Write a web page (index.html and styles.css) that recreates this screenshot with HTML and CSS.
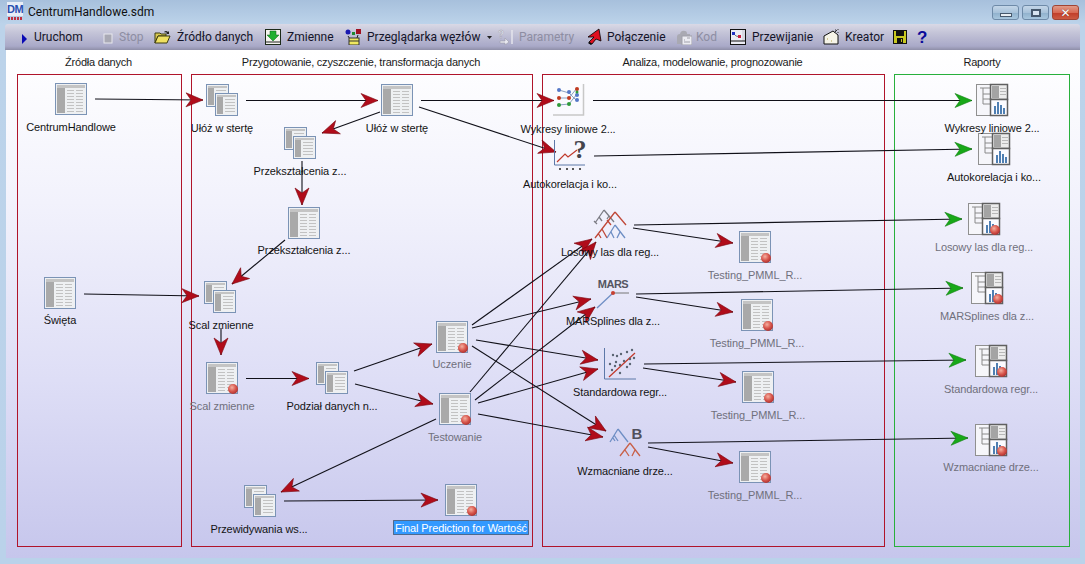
FILE: index.html
```html
<!DOCTYPE html>
<html lang="pl">
<head>
<meta charset="utf-8">
<title>CentrumHandlowe.sdm</title>
<link rel="stylesheet" href="styles.css">
</head>
<body>
<div class="window">
  <header class="titlebar">
    <div class="appicon"><span class="appicon-dm">DM</span><span class="appicon-dots"></span></div>
    <div class="title">CentrumHandlowe.sdm</div>
    <div class="controls">
      <button class="ctl"><span class="glyph-min"></span></button>
      <button class="ctl ctl-max"><span class="glyph-max"></span></button>
      <button class="ctl ctl-close"><span class="glyph-close">✕</span></button>
    </div>
  </header>

  <nav class="toolbar">
    <div class="tb"><svg class="ic run" width="7" height="16" viewBox="0 0 7 16"><path d="M1 5v10l5-5z" fill="#0a0ab4"/></svg><span>Uruchom</span></div>
    <div class="tb off"><svg class="ic stop" width="10" height="16" viewBox="0 0 10 16"><rect x="1" y="5" width="8" height="9" fill="#a9a9b4" stroke="#e8e8ee"/></svg><span>Stop</span></div>
    <div class="tb"><svg class="ic" width="17" height="16" viewBox="0 0 17 16"><path d="M1 4h5l1 1h5v2H4L1 14z" fill="#d8c850" stroke="#3c3c10"/><path d="M4 7h12l-3 7H1z" fill="#efe060" stroke="#3c3c10"/><path d="M10 3q2-2 4 0l1-1v3h-3l1-1q-1-1-2-.5" fill="#222"/></svg><span>Źródło danych</span></div>
    <div class="tb"><svg class="ic" width="16" height="16" viewBox="0 0 16 16"><rect x=".5" y=".5" width="15" height="15" fill="#f4f4ee" stroke="#1c2a18"/><path d="M5 2h6v4h3l-6 6-6-6h3z" fill="#20b030" stroke="#106018" stroke-width=".5"/><path d="M1 13h14" stroke="#222"/></svg><span>Zmienne</span></div>
    <div class="tb"><svg class="ic" width="16" height="16" viewBox="0 0 16 16"><circle cx="3" cy="3" r="2.500" fill="#1a1ab0"/><rect x="11" y="0" width="5" height="5" fill="#a01020"/><rect x="7" y="3" width="3" height="3" fill="#208830"/><path d="M3 7l2 3M13 6l-1 3" stroke="#222"/><rect x="4" y="9" width="10" height="7" fill="#f0e860" stroke="#333"/><path d="M4 12h10" stroke="#333"/></svg><span>Przeglądarka węzłów</span><svg class="caret" width="5" height="3" viewBox="0 0 5 3"><path d="M0 0h5L2.500 3z" fill="#222"/></svg></div>
    <div class="tb off"><svg class="ic" width="16" height="16" viewBox="0 0 16 16"><text x="1" y="9" class="ic-q">?</text><path d="M3 12h5v-3l4 4-4 3v-2H3z" fill="#e8e8f0" stroke="#9a9aa8" stroke-width=".6"/><path d="M15 1v14" stroke="#e4e4ec" stroke-width="1.500"/></svg><span>Parametry</span></div>
    <div class="tb"><svg class="ic" width="16" height="18" viewBox="0 0 16 18"><path d="M12 1L14 13 9 11 5 16 2 14 7 9 1 9z" fill="#e01020" stroke="#000" stroke-width=".8"/><path d="M2 14l3 2-1 1-3-2z" fill="#000"/></svg><span class="tight">Połączenie</span></div>
    <div class="tb off"><svg class="ic" width="16" height="16" viewBox="0 0 16 16"><path d="M1 8q0-3 3-3 1-4 5-3 2 0 2 3h3v2H7v8H1z" fill="#a9a9b2"/><rect x="6" y="7" width="10" height="9" fill="#ececf2" stroke="#a0a0aa"/><path d="M8 13h6M8 11h1M11 9h3" stroke="#a0a0aa"/></svg><span class="tight">Kod</span></div>
    <div class="tb"><svg class="ic" width="16" height="16" viewBox="0 0 16 16"><rect x=".5" y=".5" width="15" height="15" fill="#ececf4" stroke="#111"/><rect x="12" y="1" width="3" height="11" fill="#d8d8e2"/><path d="M1 12h14" stroke="#111"/><path d="M3 4l3 3 4 1" fill="none" stroke="#777"/><rect x="2" y="3" width="3" height="3" fill="#2030c0"/><rect x="8" y="6" width="3" height="3" fill="#c82040"/></svg><span>Przewijanie</span></div>
    <div class="tb"><svg class="ic" width="16" height="16" viewBox="0 0 16 16"><path d="M1 7L10 2l5 4v9H1z" fill="#f6f4e8" stroke="#111"/><path d="M11 4l3-3M12 1h1M15 3v1M15 0v1" stroke="#333"/><path d="M4 10h1M8 12h1" stroke="#b0a050"/></svg><span>Kreator</span></div>
    <div class="tb"><svg width="14" height="14" viewBox="0 0 14 14"><rect x=".5" y=".5" width="13" height="13" fill="#c8c820" stroke="#111"/><rect x="3" y="1" width="8" height="5" fill="#111"/><rect x="4" y="8" width="6" height="5" fill="#111"/><rect x="8" y="9" width="1" height="3" fill="#c8c820"/></svg></div>
    <div class="tb help">?</div>
  </nav>

  <main class="canvas">
    <svg class="diagram" width="1074" height="508" viewBox="6 50 1074 508">
      <defs>
        <marker id="hr" markerUnits="userSpaceOnUse" markerWidth="20" markerHeight="18" refX="18" refY="9" orient="auto"><path d="M18 9L1 2 6 9 1 16z" fill="#b00c1a" stroke="#7c0810" stroke-width=".6"/></marker>
        <marker id="hg" markerUnits="userSpaceOnUse" markerWidth="20" markerHeight="18" refX="18" refY="9" orient="auto"><path d="M18 9L1 2 6 9 1 16z" fill="#18a818" stroke="#108010" stroke-width=".6"/></marker>
        <radialGradient id="redball" cx=".4" cy=".35" r=".7"><stop offset="0" stop-color="#f4b0a0"/><stop offset=".55" stop-color="#d8564c"/><stop offset="1" stop-color="#a82c2c"/></radialGradient>

        <symbol id="rows" viewBox="0 0 32 32" overflow="visible">
          <rect x=".5" y=".5" width="31" height="31" fill="#eef0f2" stroke="#7b93b5"/>
          <rect x="2" y="2" width="28" height="3" fill="#c4c4c4"/>
          <rect x="2" y="5" width="8" height="25" fill="#a9a9a9"/>
          <path d="M12 7.500h7M21 7.500h7M12 10.500h7M21 10.500h7M12 13.500h7M21 13.500h7M12 16.500h7M21 16.500h7M12 19.500h7M21 19.500h7M12 22.500h7M21 22.500h7M12 25.500h7M21 25.500h7M12 28.500h7M21 28.500h7" stroke="#c2c2c2"/>
        </symbol>
        <symbol id="tb" viewBox="0 0 32 32" overflow="visible">
          <use href="#rows" width="32" height="32"/>
          <circle cx="27" cy="27" r="5" fill="url(#redball)"/>
        </symbol>
        <symbol id="small" viewBox="0 0 23 23">
          <rect x=".5" y=".5" width="22" height="22" fill="#eef0f2" stroke="#7b93b5"/>
          <rect x="2" y="2" width="19" height="2" fill="#c4c4c4"/>
          <rect x="2" y="4" width="6" height="17" fill="#a9a9a9"/>
          <path d="M10 6.500h10M10 9.500h10M10 12.500h10M10 15.500h10M10 18.500h10" stroke="#c2c2c2"/>
        </symbol>
        <symbol id="stack" viewBox="0 0 32 32">
          <use href="#small" x="0" y="0" width="23" height="23"/>
          <use href="#small" x="9" y="9" width="23" height="23"/>
        </symbol>
        <symbol id="rep" viewBox="0 0 32 32" overflow="visible">
          <rect x=".5" y=".5" width="14" height="31" fill="#f6f6fa" stroke="#909090"/>
          <path d="M4 4h10M7 4v16M7 10h7M7 15h7M7 20h7" fill="none" stroke="#8a8a8a"/>
          <rect x="14.500" y=".5" width="17" height="15" fill="#ececec" stroke="#606060" stroke-width="1.500"/>
          <rect x="16" y="2" width="7" height="12" fill="#a4a4a4"/>
          <path d="M24 4.500h6M24 7.500h6M24 10.500h6" stroke="#b8b8b8"/>
          <rect x="14.500" y="15.500" width="17" height="16" fill="#fbfbff" stroke="#606060" stroke-width="1.500"/>
          <path d="M18 22h2v8h-2zM21 18h2v12h-2zM24 21h2v9h-2zM27 24h2v6h-2z" fill="#4f7fb2"/>
        </symbol>
        <symbol id="repb" viewBox="0 0 32 32" overflow="visible">
          <use href="#rep" width="32" height="32"/>
          <circle cx="27" cy="27" r="5" fill="url(#redball)"/>
        </symbol>
      </defs>

      <rect class="zone red" x="17.500" y="74.500" width="164" height="472"/>
      <rect class="zone red" x="191.500" y="74.500" width="341" height="472"/>
      <rect class="zone red" x="542.500" y="74.500" width="342" height="472"/>
      <rect class="zone green" x="894.500" y="74.500" width="175" height="472"/>

      <g class="cap">
        <text x="98.500" y="66">Źródła danych</text>
        <text x="361" y="66">Przygotowanie, czyszczenie, transformacja danych</text>
        <text x="712.500" y="66">Analiza, modelowanie, prognozowanie</text>
        <text x="982" y="66">Raporty</text>
      </g>

      <g class="links-r">
        <path d="M95 99L203 100"/><path d="M246 100.500H378"/><path d="M421 100.500H554"/>
        <path d="M419 107L556 152"/><path d="M380 112L322 133"/><path d="M302 161V205"/>
        <path d="M285 240L232 284"/><path d="M84 294L199 296"/><path d="M221 328V355"/>
        <path d="M246 378.500H309"/><path d="M354 371L432 344"/><path d="M355 384L433 404"/>
        <path d="M472 325L592 239"/><path d="M470 392L596 242"/>
        <path d="M472 328L591 299"/><path d="M475 400L595 307"/>
        <path d="M476 340L598 360"/><path d="M478 403L598 369"/>
        <path d="M472 346L606 431"/><path d="M478 414L603 437"/>
        <path d="M436 419L281 492"/><path d="M284 501L438 500"/>
        <path d="M633 228L733 243"/><path d="M636 297L733 312"/>
        <path d="M643 368L736 382"/><path d="M648 447L733 463"/>
      </g>
      <g class="links-g">
        <path d="M593 100.500H972"/><path d="M594 156L972 149"/>
        <path d="M634 225L962 219"/><path d="M636 294L963 288"/>
        <path d="M644 364L966 360"/><path d="M648 443L968 438"/>
      </g>

      <use href="#rows" x="55" y="83" width="32" height="32"/>
      <use href="#rows" x="44" y="277" width="32" height="32"/>
      <use href="#stack" x="206" y="84" width="32" height="32"/>
      <use href="#rows" x="381" y="84" width="32" height="32"/>
      <use href="#stack" x="284" y="127" width="32" height="32"/>
      <use href="#rows" x="288" y="207" width="32" height="32"/>
      <use href="#stack" x="204" y="281" width="32" height="32"/>
      <use href="#tb" x="206" y="362" width="32" height="32"/>
      <use href="#stack" x="316" y="362" width="32" height="32"/>
      <use href="#tb" x="436" y="321" width="32" height="32"/>
      <use href="#tb" x="439" y="393" width="32" height="32"/>
      <use href="#stack" x="244" y="485" width="32" height="32"/>
      <use href="#tb" x="445" y="484" width="32" height="32"/>
      <use href="#tb" x="739" y="231" width="32" height="32"/>
      <use href="#tb" x="741" y="299" width="32" height="32"/>
      <use href="#tb" x="742" y="371" width="32" height="32"/>
      <use href="#tb" x="739" y="451" width="32" height="32"/>
      <use href="#rep" x="976" y="84" width="32" height="32"/>
      <use href="#rep" x="978" y="133" width="32" height="32"/>
      <use href="#repb" x="968" y="203" width="32" height="32"/>
      <use href="#repb" x="971" y="272" width="32" height="32"/>
      <use href="#repb" x="975" y="345" width="32" height="32"/>
      <use href="#repb" x="975" y="424" width="32" height="32"/>

      <g class="node-line">
        <path d="M583.500 84v31H553" stroke="#c8c8c8" fill="none" stroke-width="1.500"/>
        <path d="M559 90l10 3 8 8M559 98h10l8-10M559 105l10-1 8-10" fill="none" stroke="#8aa0c0"/>
        <g fill="#5578c8"><circle cx="559" cy="90" r="2"/><circle cx="569" cy="92" r="2"/><circle cx="577" cy="95" r="2"/><circle cx="577" cy="100" r="2"/></g>
        <g fill="#c03a20"><circle cx="559" cy="98" r="2"/><circle cx="569" cy="98" r="2"/><circle cx="577" cy="89" r="2"/></g>
        <g fill="#2e9a3a"><circle cx="559" cy="105" r="2"/><circle cx="569" cy="104" r="2"/><circle cx="577" cy="92" r="1.500"/></g>
      </g>

      <g class="node-auto">
        <path d="M554.500 140v25H585" fill="none" stroke="#5d78a8"/>
        <path d="M557 162l8-8 3 3 9-7" fill="none" stroke="#c0392b" stroke-width="1.200"/>
        <text class="autoq" x="580" y="158">?</text>
        <g fill="#555"><rect x="559" y="168" width="2" height="2"/><rect x="566" y="168" width="2" height="2"/><rect x="572" y="168" width="2" height="2"/><rect x="579" y="168" width="2" height="2"/></g>
      </g>

      <g class="node-forest" fill="none" stroke-width="1.300">
        <path d="M604 210l-9 13M604 210l10 12M599 217l3 4M609 216l-2 3M594 221l3 3" stroke="#7c7c84"/>
        <path d="M615 212l11 13M615 212l-20 26M602 229l5 9M607 220l4 5M598 233l3 5" stroke="#c04838"/>
        <path d="M615 225l-8 13M615 225l10 13M611 232l3 6M620 232l-3 6" stroke="#6e8ec4"/>
      </g>

      <g class="node-mars">
        <text class="mars" x="613" y="288">MARS</text>
        <path d="M597 308l16-15" stroke="#6e8ec4" fill="none" stroke-width="1.300"/>
        <path d="M613 293h16" stroke="#777" fill="none"/>
        <circle cx="613" cy="293" r="2" fill="#c84030"/>
      </g>

      <g class="node-reg">
        <path d="M604.500 348v31H636" fill="none" stroke="#5d78a8"/>
        <path d="M609 377l26-24" stroke="#c0392b" stroke-width="1.200"/>
        <g fill="#5a6472">
          <circle cx="612" cy="370" r="1.200"/><circle cx="615" cy="366" r="1.200"/><circle cx="610" cy="364" r="1.200"/><circle cx="613" cy="355" r="1.200"/><circle cx="617" cy="356" r="1.200"/><circle cx="621" cy="354" r="1.200"/><circle cx="627" cy="352" r="1.200"/><circle cx="632" cy="350" r="1.200"/><circle cx="620" cy="365" r="1.200"/><circle cx="624" cy="361" r="1.200"/><circle cx="630" cy="359" r="1.200"/><circle cx="634" cy="358" r="1.200"/><circle cx="627" cy="367" r="1.200"/><circle cx="620" cy="373" r="1.200"/><circle cx="630" cy="364" r="1.200"/><circle cx="616" cy="362" r="1.200"/>
        </g>
      </g>

      <g class="node-boost" fill="none" stroke-width="1.300">
        <path d="M618 429l-8 13M618 429l10 13M614 435l4 6M613 438l2 3" stroke="#6e8ec4"/>
        <path d="M630 443l-10 13M630 443l10 13M625 450l4 6M635 450l-3 6" stroke="#c86048"/>
        <text class="boost" x="637" y="439">B</text>
      </g>

      <g class="lbl">
        <text x="71" y="131">CentrumHandlowe</text>
        <text x="60" y="324">Święta</text>
        <text x="222" y="132">Ułóż w stertę</text>
        <text x="397" y="132">Ułóż w stertę</text>
        <text x="300" y="175">Przekształcenia z...</text>
        <text x="304" y="254">Przekształcenia z...</text>
        <text x="221" y="329">Scal zmienne</text>
        <text x="332" y="410">Podział danych n...</text>
        <text x="259" y="533">Przewidywania ws...</text>
        <text x="568" y="133">Wykresy liniowe 2...</text>
        <text x="570" y="188">Autokorelacja i ko...</text>
        <text x="610" y="256">Losowy las dla reg...</text>
        <text x="613" y="325">MARSplines dla z...</text>
        <text x="620" y="396">Standardowa regr...</text>
        <text x="625" y="475">Wzmacniane drze...</text>
        <text x="992" y="132">Wykresy liniowe 2...</text>
        <text x="994" y="181">Autokorelacja i ko...</text>
      </g>
      <g class="lbl dim">
        <text x="222" y="410">Scal zmienne</text>
        <text x="452" y="368">Uczenie</text>
        <text x="455" y="441">Testowanie</text>
        <text x="755" y="279">Testing_PMML_R...</text>
        <text x="757" y="347">Testing_PMML_R...</text>
        <text x="758" y="419">Testing_PMML_R...</text>
        <text x="755" y="499">Testing_PMML_R...</text>
        <text x="984" y="251">Losowy las dla reg...</text>
        <text x="987" y="320">MARSplines dla z...</text>
        <text x="991" y="393">Standardowa regr...</text>
        <text x="991" y="471">Wzmacniane drze...</text>
      </g>

      <rect class="sel" x="393.500" y="520.500" width="135" height="14"/>
      <text class="seltext" x="461" y="532">Final Prediction for Wartość</text>
    </svg>
  </main>
</div>
</body>
</html>
```

FILE: styles.css
```css
* { box-sizing: border-box; }
html, body { margin: 0; padding: 0; }
body { width: 1085px; height: 564px; overflow: hidden; background: #b9d1ea; }

.window {
  width: 1085px;
  height: 564px;
  display: flex;
  flex-direction: column;
  background: linear-gradient(#a7c0dc 0, #bcd3ea 24px, #bad2ea 100%);
  font-family: Roboto, "Noto Sans", sans-serif;
  font-size: 12px;
  color: #1a1a1a;
}

.titlebar {
  height: 24px;
  flex: none;
  display: flex;
  align-items: center;
  padding-left: 7px;
}
.appicon {
  width: 16px;
  height: 20px;
  display: flex;
  flex-direction: column;
  align-items: center;
  margin-right: 5px;
}
.appicon-dm {
  width: 16px;
  height: 14px;
  text-align: center;
  background: #e8eef6;
  color: #2a50b0;
  font: bold 11px/14px "Liberation Sans", sans-serif;
  letter-spacing: -0.5px;
}
.appicon-dots {
  width: 15px;
  height: 3px;
  margin-top: 1px;
  background: repeating-linear-gradient(90deg, #c03040 0 2px, transparent 2px 3px);
}
.title { font-size: 12px; color: #101010; flex: 1; margin-top: -1px; }
.controls { display: flex; gap: 3px; padding-right: 6px; align-self: flex-start; padding-top: 5px; }
.ctl {
  width: 27px;
  height: 15px;
  padding: 0;
  border: 1px solid #6e8aa8;
  border-radius: 3px;
  background: linear-gradient(#c4d6e8 0, #a8c2da 50%, #8fb0cc 51%, #a8c6de 100%);
  display: flex;
  align-items: center;
  justify-content: center;
}
.ctl-close {
  border-color: #a04434;
  background: linear-gradient(#e09a88 0, #d86a54 50%, #c03c28 51%, #cc5a42 100%);
}
.glyph-min { width: 12px; height: 4px; margin-top: 4px; background: #e8eef4; border: 1px solid #46586c; }
.glyph-max { width: 10px; height: 8px; background: #d8e4f0; border: 2px solid #46586c; }
.glyph-close { color: #fff; font: bold 12px/12px "DejaVu Sans", sans-serif; text-shadow: 0 0 1px #5a2018; }

.toolbar {
  height: 26px;
  flex: none;
  display: grid;
  grid-template-columns: 82px 51px 111px 80px 152px 90px 89px 54px 93px 70px 24px 1fr;
  align-items: center;
  margin: 0 5px;
  padding-left: 16px;
  background: linear-gradient(#d9d9e6 0, #c6c6d9 30%, #a9a9c8 85%, #8f8fa8 100%);
  border-top-left-radius: 3px;
  border-top-right-radius: 3px;
  color: #141428;
}
.tb { display: flex; align-items: center; white-space: nowrap; }
.tb.off { color: #8d8da2; }
.ic { margin-right: 6px; flex: none; }
.caret { margin-left: 7px; }
.tight { margin-left: -2px; }
.help { color: #0a0a9a; font: bold 17px/17px "Liberation Sans", sans-serif; }
.ic-q { font: bold 10px "Liberation Sans", sans-serif; fill: #e8e8f0; stroke: #9a9aa8; stroke-width: .4px; }

.canvas {
  width: 1074px;
  height: 508px;
  flex: none;
  margin-left: 6px;
  background: linear-gradient(#ffffff 0, #f2f2fc 30%, #dedef6 65%, #c6c6ec 100%);
}
.diagram { display: block; }

.zone { fill: none; }
.zone.red { stroke: #b0142a; }
.zone.green { stroke: #28b03c; }

.cap text, .lbl text, .seltext {
  font-family: "Liberation Sans", Arial, sans-serif;
  font-size: 11px;
  letter-spacing: -0.1px;
  text-anchor: middle;
  fill: #141414;
}
.lbl.dim text { fill: #70707c; }
.cap text { fill: #1a1a1a; letter-spacing: -0.22px; }
.seltext { fill: #ffffff; }

.links-r path { fill: none; stroke: #101018; stroke-width: 1.100; marker-end: url(#hr); }
.links-g path { fill: none; stroke: #101018; stroke-width: 1.100; marker-end: url(#hg); }

.autoq { font: bold 26px "Liberation Serif", serif; fill: #44444c; text-anchor: middle; }
.mars { font: bold 11px "Liberation Sans", sans-serif; fill: #555560; text-anchor: middle; letter-spacing: -0.5px; }
.boost { font: bold 15px "Liberation Sans", sans-serif; fill: #50505c; text-anchor: middle; stroke: none; }

.sel { fill: #3399ff; stroke: #222; stroke-dasharray: 1 1; }
```
